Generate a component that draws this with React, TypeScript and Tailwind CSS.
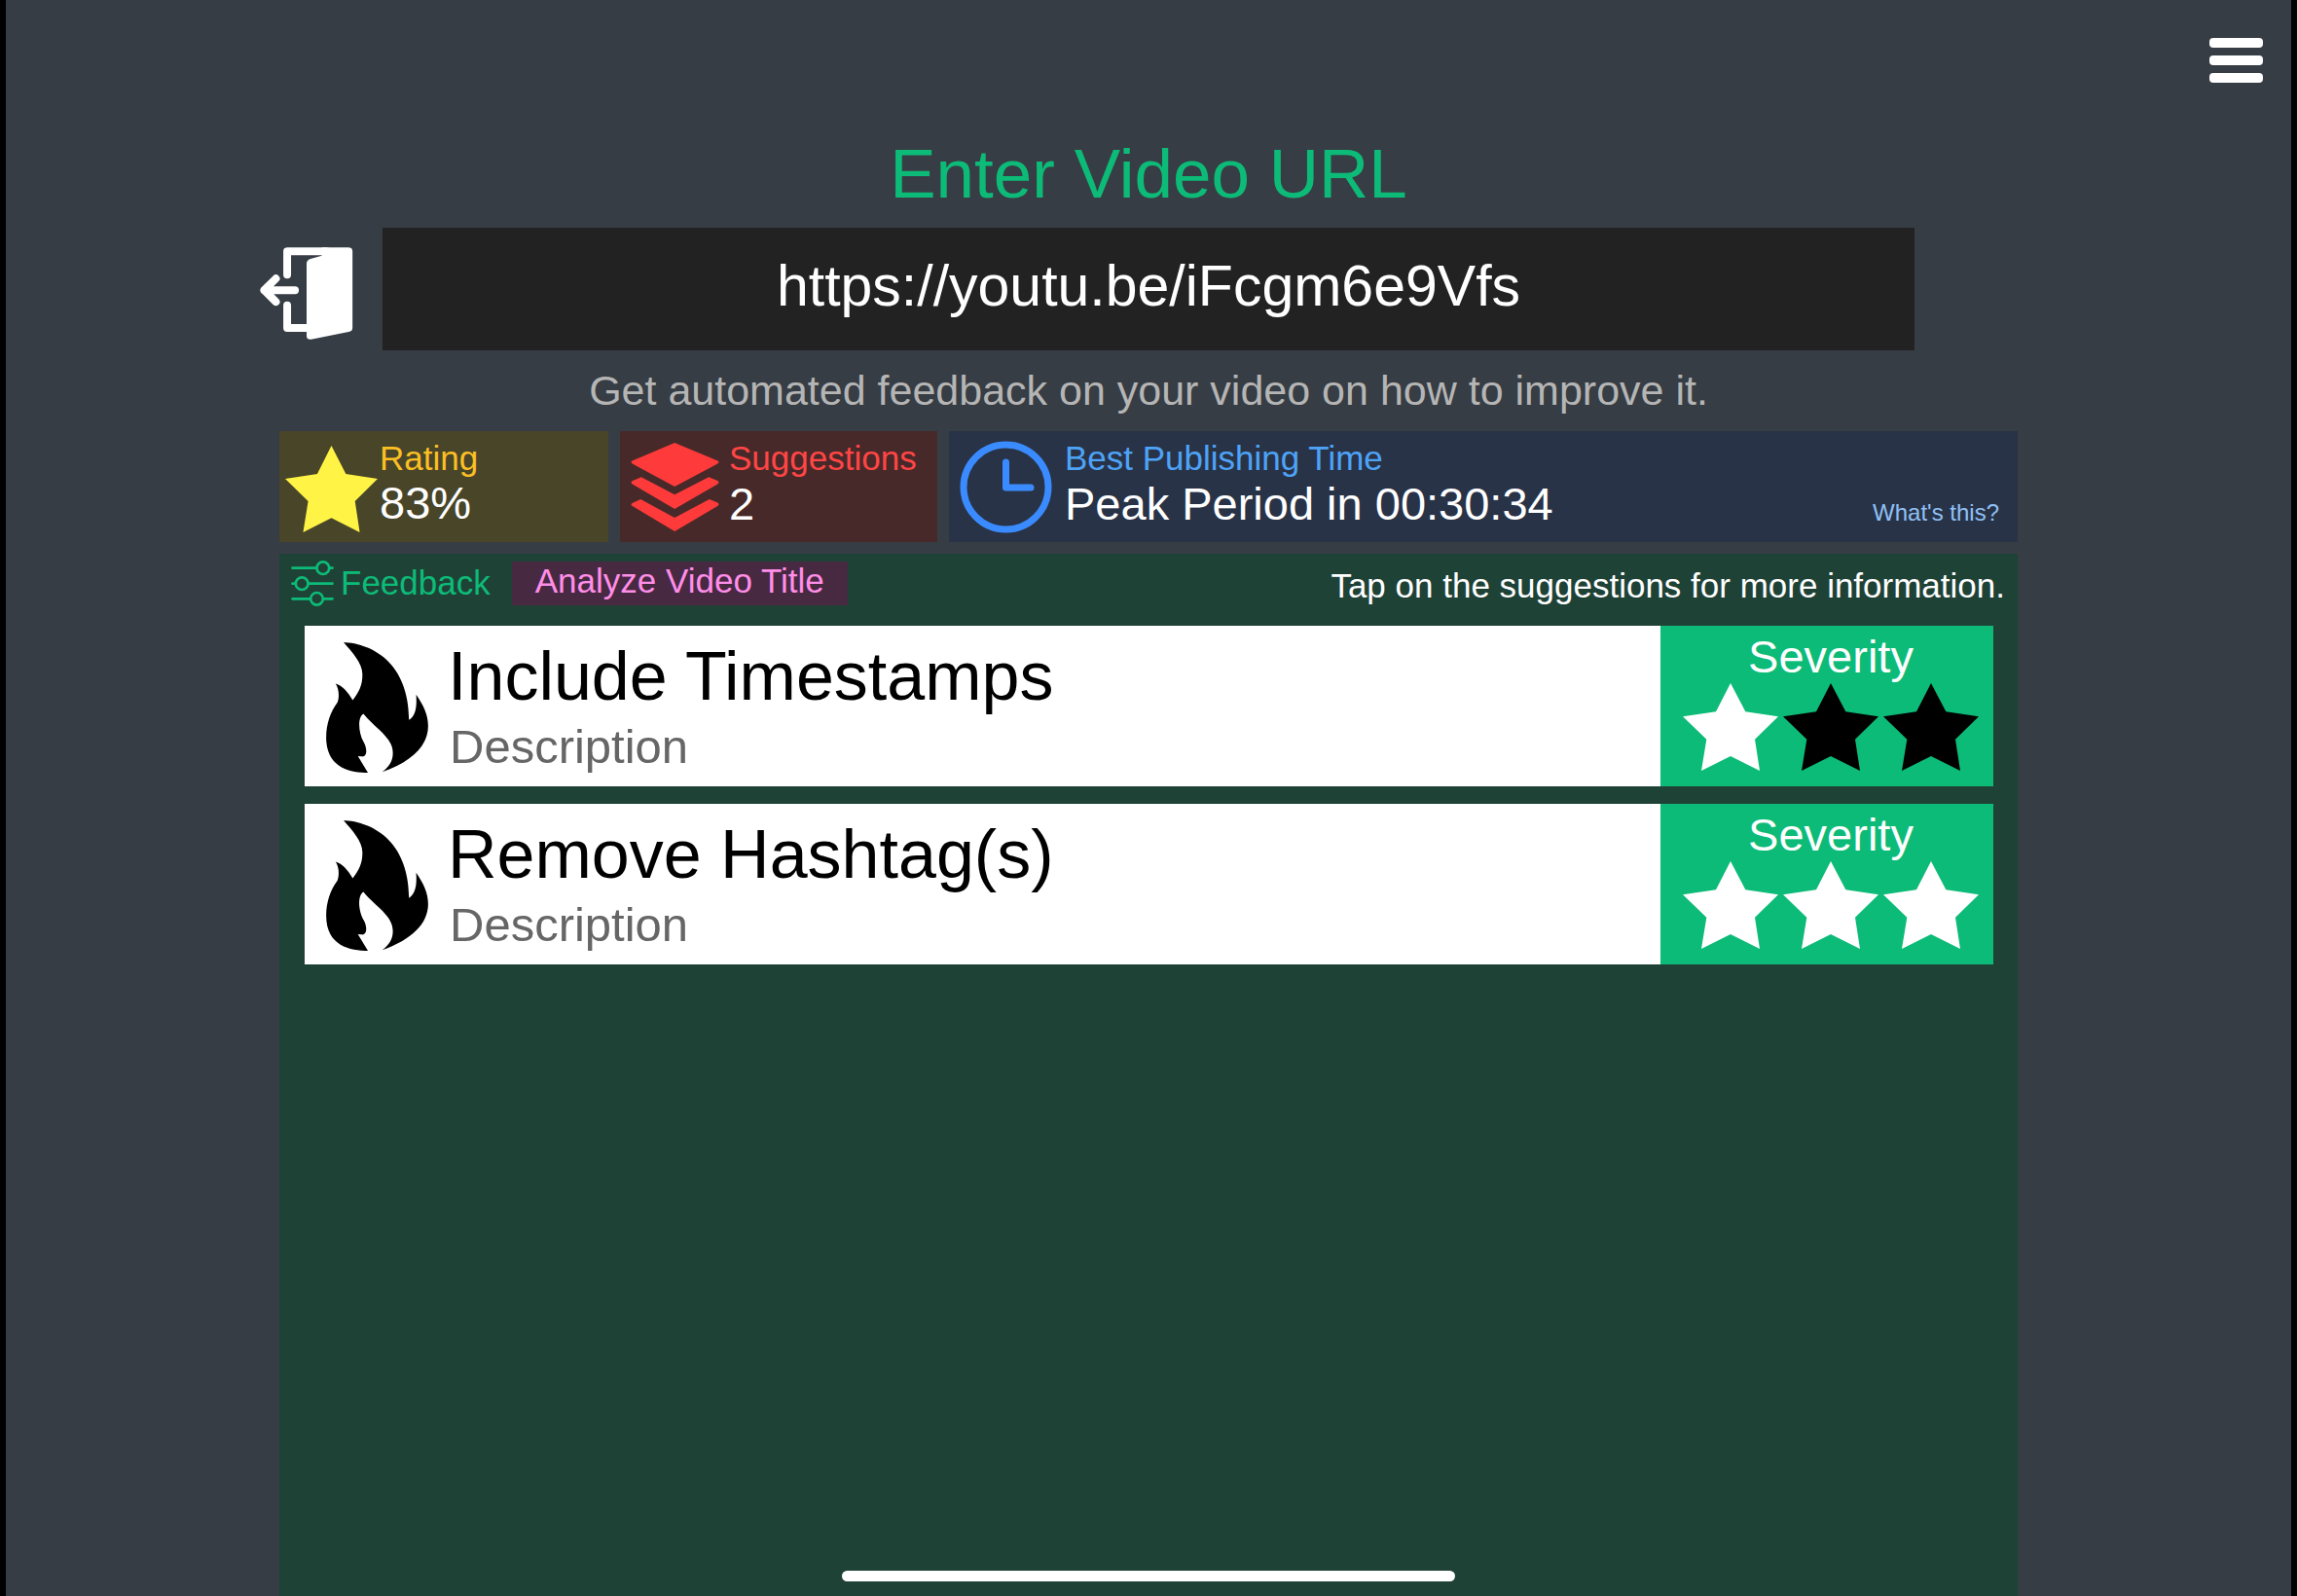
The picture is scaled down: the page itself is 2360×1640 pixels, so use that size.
import { useState } from 'react'

interface IconProps {
  className?: string
}

interface Suggestion {
  id: string
  title: string
  description: string
  severity: number
}

const MAX_SEVERITY = 3

const suggestions: Suggestion[] = [
  { id: 'timestamps', title: 'Include Timestamps', description: 'Description', severity: 1 },
  { id: 'hashtags', title: 'Remove Hashtag(s)', description: 'Description', severity: 3 },
]

function StarIcon({ className = '' }: IconProps) {
  return (
    <svg viewBox="0 0 294 270" preserveAspectRatio="none" fill="currentColor" className={className} aria-hidden="true">
      <path d="M147 0L193 88L294 103L222 173L237 270L147 225L57 270L73 173L0 103L102 88Z" />
    </svg>
  )
}

function LayersIcon({ className = '' }: IconProps) {
  return (
    <svg viewBox="0 0 272 273" fill="currentColor" className={className} aria-hidden="true">
      <path d="M135 0L266 55Q276 60 266 65L135 135L6 65Q-4 60 6 55Z" />
      <path d="M32 106L135 160L240 106L266 116Q276 122 266 128L135 204L6 128Q-4 122 6 117Z" />
      <path d="M30 174L135 231L242 174L266 184Q276 190 266 196L135 273L6 196Q-4 190 6 185Z" />
    </svg>
  )
}

function ClockIcon({ className = '' }: IconProps) {
  return (
    <svg viewBox="0 0 95 95" fill="none" stroke="currentColor" strokeWidth="7" strokeLinecap="round" strokeLinejoin="round" className={className} aria-hidden="true">
      <circle cx="47.5" cy="47.5" r="43.5" />
      <path d="M47.5 22V48H73" />
    </svg>
  )
}

function SlidersIcon({ className = '' }: IconProps) {
  return (
    <svg viewBox="0 0 131 141" fill="none" stroke="currentColor" strokeWidth="8" strokeLinecap="round" className={className} aria-hidden="true">
      <path d="M4 23H78M119 23H127M4 71H13M54 71H127M4 118H59M100 118H127" />
      <circle cx="98" cy="23" r="19" />
      <circle cx="33" cy="71" r="19" />
      <circle cx="79" cy="118" r="19" />
    </svg>
  )
}

function FireIcon({ className = '' }: IconProps) {
  return (
    <svg viewBox="45 31 315 403" fill="currentColor" className={className} aria-hidden="true">
      <path d="M99 31C185 35 300 92 301 271C320 258 326 235 323 193C345 225 360 255 360 290C360 350 310 400 218 432C240 415 251 398 251 373C251 325 200 300 160 252C141 263 145 310 160 338C171 356 174 385 155 384L143 383L174 434C120 434 45 420 45 325C45 285 58 245 80 217C86 200 85 175 74 159C95 165 112 185 127 210C146 185 157 165 157 130C157 95 125 62 99 31Z" />
    </svg>
  )
}

function ExitIcon({ className = '' }: IconProps) {
  return (
    <svg viewBox="84 101 288 286" className={className} aria-hidden="true">
      <g fill="none" stroke="currentColor" strokeWidth="24" strokeLinecap="round" strokeLinejoin="round">
        <path d="M168 186V114H290M168 281V351H235" />
        <path d="M192 234H97M133 198L97 234L133 270" />
      </g>
      <path fill="currentColor" d="M228 152Q228 141 240 137L275 127V102H358Q370 102 370 114V350Q370 361 358 363L242 386Q228 388 228 376Z" />
    </svg>
  )
}

function SuggestionRow({ suggestion }: { suggestion: Suggestion }) {
  return (
    <li>
      <button type="button" className="flex h-[165px] w-full bg-white text-left">
        <span className="flex min-w-0 flex-1 gap-5 pl-[22px]">
          <FireIcon className="mt-[17px] h-[134px] w-[105px] shrink-0 text-black" />
          <span className="flex min-w-0 flex-col pt-3">
            <span className="text-[70px] leading-[80px] text-black">{suggestion.title}</span>
            <span className="pl-0.5 text-[49px] leading-[64px] text-[#666666]">{suggestion.description}</span>
          </span>
        </span>
        <span className="flex h-full w-[342px] shrink-0 flex-col items-center bg-[#0dbb78] pt-1 pl-2">
          <span className="text-[47px] leading-[55px] text-white">Severity</span>
          <span className="flex gap-[5px]">
            {Array.from({ length: MAX_SEVERITY }, (_, i) => (
              <StarIcon
                key={i}
                className={i < suggestion.severity ? 'h-[90px] w-[98px] text-white' : 'h-[90px] w-[98px] text-black'}
              />
            ))}
          </span>
        </span>
      </button>
    </li>
  )
}

export default function App() {
  const [url, setUrl] = useState('https://youtu.be/iFcgm6e9Vfs')

  return (
    <div className="min-h-screen bg-black px-1.5 font-['Liberation_Sans',Arial,sans-serif]">
      <div className="flex min-h-screen flex-col bg-[#373d44]">
        <header className="flex justify-end pt-[39px] pr-[29px]">
          <button type="button" aria-label="Menu" className="flex h-[46px] w-[55px] flex-col justify-between">
            <span className="h-2.5 w-full rounded-sm bg-white" />
            <span className="h-2.5 w-full rounded-sm bg-white" />
            <span className="h-2.5 w-full rounded-sm bg-white" />
          </button>
        </header>

        <main className="flex flex-1 flex-col items-center">
          <label htmlFor="video-url" className="mt-[59px] text-[71px] leading-[70px] text-[#0dbb78]">
            Enter Video URL
          </label>

          {/* Exit button and URL field */}
          <div className="mt-5 grid w-full grid-cols-[1fr_67%_1fr] items-center">
            <button type="button" aria-label="Exit" className="mr-[30px] justify-self-end pt-2">
              <ExitIcon className="h-[95px] w-24 text-white" />
            </button>
            <input
              id="video-url"
              type="text"
              value={url}
              onChange={(e) => setUrl(e.target.value)}
              className="h-[126px] w-full bg-[#222222] pb-1.5 text-center text-[59px] text-white outline-none"
            />
          </div>

          <p className="mt-[17px] text-[43px] leading-[48px] text-[#b5b5b5]">
            Get automated feedback on your video on how to improve it.
          </p>

          <div className="mt-[18px] flex w-full max-w-[1786px] flex-1 flex-col gap-3">
            {/* Summary cards */}
            <section className="grid h-[114px] grid-cols-[338fr_326fr_1098fr] gap-3">
              <div className="flex gap-0.5 bg-[#484529] pl-1.5">
                <StarIcon className="mt-[15px] h-[89px] w-[95px] shrink-0 text-[#fff345]" />
                <div className="pt-2">
                  <h2 className="text-[35px] leading-10 text-[#fbbf24]">Rating</h2>
                  <p className="text-[47px] leading-[52px] text-white">83%</p>
                </div>
              </div>

              <div className="flex gap-2.5 bg-[#482929] pl-[11px]">
                <LayersIcon className="mt-3 size-[91px] shrink-0 text-[#ff3a3a]" />
                <div className="pt-2">
                  <h2 className="text-[35px] leading-10 text-[#ff4545]">Suggestions</h2>
                  <p className="text-[47px] leading-[54px] text-white">{suggestions.length}</p>
                </div>
              </div>

              <div className="flex gap-[13px] bg-[#293347] pr-[19px] pl-[11px]">
                <ClockIcon className="mt-2.5 size-[95px] shrink-0 text-[#3a8bff]" />
                <div className="pt-2">
                  <h2 className="text-[35px] leading-10 text-[#4da3f7]">Best Publishing Time</h2>
                  <p className="text-[47px] leading-[54px] text-white">Peak Period in 00:30:34</p>
                </div>
                <a href="#publishing-time" className="mb-4 ml-auto self-end text-[24px] leading-7 text-[#8fc0f5]">
                  What's this?
                </a>
              </div>
            </section>

            {/* Feedback list */}
            <section className="flex-1 bg-[#1f4237]">
              <div className="flex h-[54px] items-center pt-1.5 pr-[13px] pl-3">
                <SlidersIcon className="h-[47px] w-11 shrink-0 text-[#0dbb78]" />
                <h2 className="ml-[7px] text-[35px] leading-10 text-[#0dbb78]">Feedback</h2>
                <button type="button" className="ml-[22px] h-[45px] bg-[#482942] px-6 pb-1 text-[35px] leading-10 text-[#ff8ee8]">
                  Analyze Video Title
                </button>
                <p className="ml-auto self-end text-[35px] leading-[42px] text-white">
                  Tap on the suggestions for more information.
                </p>
              </div>
              <ul className="mt-5 flex flex-col gap-[18px] pr-[25px] pl-[26px]">
                {suggestions.map((suggestion) => (
                  <SuggestionRow key={suggestion.id} suggestion={suggestion} />
                ))}
              </ul>
            </section>
          </div>
        </main>
      </div>

      {/* Home indicator */}
      <div className="fixed bottom-[15px] left-1/2 h-[11px] w-[630px] -translate-x-1/2 rounded-full bg-white" />
    </div>
  )
}
